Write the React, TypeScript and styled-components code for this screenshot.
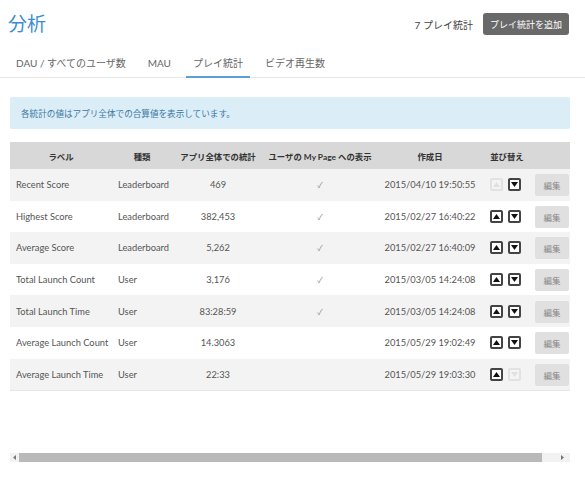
import React from "react";
import styled, { createGlobalStyle } from "styled-components";

const Global = createGlobalStyle`
  html, body { margin: 0; padding: 0; background: #fff; }
  body { font-family: Lato, "Noto Sans CJK JP", sans-serif; color: #555; }
`;

const Page = styled.div`
  width: 585px;
  height: 480px;
  box-sizing: border-box;
  overflow: hidden;
`;

const Header = styled.div`
  display: flex;
  align-items: center;
  justify-content: space-between;
  padding: 12px 16px 0 8px;
`;

const Title = styled.h1`
  margin: 0;
  font-size: 19px;
  line-height: 24px;
  font-weight: 400;
  color: #3b8dd6;
`;

const Actions = styled.div`
  display: flex;
  align-items: center;
  gap: 10px;
`;

const Count = styled.span`
  font-size: 10px;
  color: #444;
`;

const AddButton = styled.button`
  height: 22px;
  padding: 0 7px;
  border: none;
  border-radius: 3px;
  background: #696969;
  color: #fff;
  font-family: inherit;
  font-size: 9px;
`;

const Tabs = styled.div`
  display: flex;
  gap: 8px;
  margin-top: 12px;
  padding-left: 9px;
  border-bottom: 1px solid #e6e6e6;
`;

const Tab = styled.div<{ $active?: boolean }>`
  height: 30px;
  line-height: 30px;
  padding: 0 7px;
  font-size: 10px;
  color: #666;
  box-sizing: border-box;
  border-bottom: 2px solid ${(p) => (p.$active ? "#5b9fd6" : "transparent")};
  margin-bottom: -1px;
`;

const Alert = styled.div`
  margin: 19px 15px 0 10px;
  height: 32px;
  display: flex;
  align-items: center;
  padding-left: 11px;
  background: #dbedf7;
  border-radius: 2px;
  font-size: 8.6px;
  color: #3a78a3;
`;

const Scroller = styled.div`
  margin: 13px 15px 0 10px;
`;

const TableWrap = styled.div`
  height: 311px;
  overflow: hidden;
`;

const Table = styled.table`
  width: 575px;
  border-collapse: collapse;
  table-layout: fixed;
  border-bottom: 1px solid #e6e6e6;
`;

const Th = styled.th<{ $w: number }>`
  width: ${(p) => p.$w}px;
  height: 27px;
  padding: 0;
  background: #d8d8d8;
  font-size: 8.4px;
  font-weight: 700;
  color: #333;
  text-align: center;
  white-space: nowrap;
`;

const Row = styled.tr<{ $alt: boolean }>`
  height: 31.6px;
  background: ${(p) => (p.$alt ? "#f3f3f3" : "#fff")};
`;

const Td = styled.td<{ $align?: "left" | "center" }>`
  padding: 0 0 0 ${(p) => (p.$align === "left" ? "6px" : "0")};
  font-size: 9.3px;
  color: #555;
  text-align: ${(p) => p.$align ?? "center"};
  white-space: nowrap;
`;

const Check = styled.span`
  font-size: 8px;
  color: #8a8a8a;
`;

const SortCell = styled.div`
  display: flex;
  justify-content: center;
  gap: 5px;
  padding-right: 4px;
`;

const ArrowBtn = styled.span<{ $disabled?: boolean }>`
  width: 13px;
  height: 13px;
  box-sizing: border-box;
  border: 2px solid ${(p) => (p.$disabled ? "#e2e2e2" : "#444")};
  border-radius: 2px;
  background: ${(p) => (p.$disabled ? "#f4f4f4" : "#fff")};
  display: flex;
  align-items: center;
  justify-content: center;
  color: ${(p) => (p.$disabled ? "#e0e0e0" : "#111")};
`;

const EditCell = styled.td`
  padding: 0 0 0 5px;
`;

const EditButton = styled.button`
  width: 34px;
  height: 22px;
  border: none;
  border-radius: 2px;
  background: #e0e0e0;
  color: #888;
  font-family: inherit;
  font-size: 8.5px;
  padding: 0;
`;

const ScrollBar = styled.div`
  display: flex;
  height: 9px;
  padding-right: 3px;
  background: #f2f2f2;
`;

const ScrollBtn = styled.div`
  width: 9px;
  display: flex;
  align-items: center;
  justify-content: center;
  color: #777;
`;

const Thumb = styled.div`
  width: 523px;
  background: #b9b9b9;
`;

const Spacer = styled.div`
  flex: 1;
`;

const Tri = ({ up }: { up: boolean }) => (
  <svg width="7" height="5" viewBox="0 0 7 5">
    <polygon points={up ? "0,5 7,5 3.5,0" : "0,0 7,0 3.5,5"} fill="currentColor" />
  </svg>
);

const SideTri = ({ left }: { left: boolean }) => (
  <svg width="3" height="5" viewBox="0 0 3 5">
    <polygon points={left ? "3,0 3,5 0,2.5" : "0,0 0,5 3,2.5"} fill="currentColor" />
  </svg>
);

const rows = [
  { label: "Recent Score", type: "Leaderboard", value: "469", my: true, date: "2015/04/10 19:50:55" },
  { label: "Highest Score", type: "Leaderboard", value: "382,453", my: true, date: "2015/02/27 16:40:22" },
  { label: "Average Score", type: "Leaderboard", value: "5,262", my: true, date: "2015/02/27 16:40:09" },
  { label: "Total Launch Count", type: "User", value: "3,176", my: true, date: "2015/03/05 14:24:08" },
  { label: "Total Launch Time", type: "User", value: "83:28:59", my: true, date: "2015/03/05 14:24:08" },
  { label: "Average Launch Count", type: "User", value: "14.3063", my: false, date: "2015/05/29 19:02:49" },
  { label: "Average Launch Time", type: "User", value: "22:33", my: false, date: "2015/05/29 19:03:30" },
];

export default function App() {
  return (
    <Page>
      <Global />
      <Header>
        <Title>分析</Title>
        <Actions>
          <Count>7 プレイ統計</Count>
          <AddButton>プレイ統計を追加</AddButton>
        </Actions>
      </Header>
      <Tabs>
        <Tab>DAU / すべてのユーザ数</Tab>
        <Tab>MAU</Tab>
        <Tab $active>プレイ統計</Tab>
        <Tab>ビデオ再生数</Tab>
      </Tabs>
      <Alert>各統計の値はアプリ全体での合算値を表示しています。</Alert>
      <Scroller>
        <TableWrap>
          <Table>
            <thead>
              <tr>
                <Th $w={102}>ラベル</Th>
                <Th $w={60}>種類</Th>
                <Th $w={92}>アプリ全体での統計</Th>
                <Th $w={112}>ユーザの My Page への表示</Th>
                <Th $w={108}>作成日</Th>
                <Th $w={46}>並び替え</Th>
                <Th $w={55}></Th>
              </tr>
            </thead>
            <tbody>
              {rows.map((r, i) => (
                <Row key={r.label} $alt={i % 2 === 0}>
                  <Td $align="left">{r.label}</Td>
                  <Td $align="left">{r.type}</Td>
                  <Td>{r.value}</Td>
                  <Td>{r.my ? <Check>✓</Check> : null}</Td>
                  <Td>{r.date}</Td>
                  <Td>
                    <SortCell>
                      <ArrowBtn $disabled={i === 0}>
                        <Tri up />
                      </ArrowBtn>
                      <ArrowBtn $disabled={i === rows.length - 1}>
                        <Tri up={false} />
                      </ArrowBtn>
                    </SortCell>
                  </Td>
                  <EditCell>
                    <EditButton>編集</EditButton>
                  </EditCell>
                </Row>
              ))}
            </tbody>
          </Table>
        </TableWrap>
        <ScrollBar>
          <ScrollBtn>
            <SideTri left />
          </ScrollBtn>
          <Thumb />
          <Spacer />
          <ScrollBtn>
            <SideTri left={false} />
          </ScrollBtn>
        </ScrollBar>
      </Scroller>
    </Page>
  );
}
